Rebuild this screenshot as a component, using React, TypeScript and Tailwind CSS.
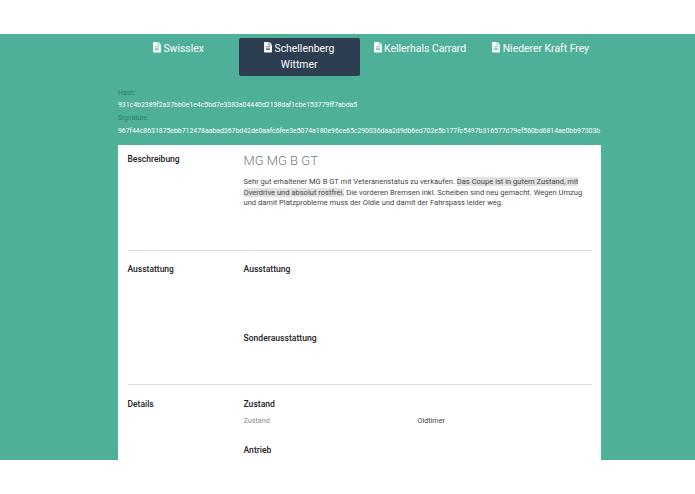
import { FaFileAlt } from 'react-icons/fa';

const tabs = [
  { name: 'Swisslex' },
  { name: 'Schellenberg Wittmer', active: true },
  { name: 'Kellerhals Carrard' },
  { name: 'Niederer Kraft Frey' },
];

export default function App() {
  return (
    <div className="bg-white h-[494px] pt-[34px] overflow-hidden font-['Roboto',sans-serif]">
      <div className="flex flex-col bg-[#4fb09a] h-[426px] overflow-hidden px-[118px] pt-1">
        <div className="grid grid-cols-4 w-[483px]">
          {tabs.map((tab) => (
            <div
              key={tab.name}
              className={`h-[38px] rounded-[2px] px-2 pt-[3px] text-center text-[10.4px] leading-[16px] text-white ${
                tab.active ? 'bg-[#2c3e50]' : ''
              }`}
            >
              <FaFileAlt className="inline-block w-[8px] h-[10.5px] mr-[2.5px] align-[-0.5px]" />
              {tab.name}
            </div>
          ))}
        </div>

        <div className="mt-[10.5px] text-[6.88px] leading-[12.75px] whitespace-nowrap">
          <p className="text-[#2f7d6b]">Hash:</p>
          <p className="text-white">931c4b2389f2a37bb0e1e4c5bd7e3383a04440d2138daf1cbe153779ff7abda5</p>
          <p className="text-[#2f7d6b]">Signature:</p>
          <p className="text-white">967f44c8631875ebb712478aabad367bd42de0aafc6fee3e5074a180e96ce65c290036daa2d9db6ed702e5b177fc5497b316577d79ef560bd6814ae0bb97303b</p>
        </div>

        <div className="mt-[7.5px] flex-1 w-[483px] bg-white px-[9.5px] text-[#333]">
          <section className="flex h-[106px] border-b border-[#ddd] pt-[8px]">
            <h3 className="w-[116px] shrink-0 text-[8.5px] leading-[12px] font-medium text-[#222]">Beschreibung</h3>
            <div>
              <h2 className="text-[13px] leading-[16px] font-light text-[#777]">MG MG B GT</h2>
              <p className="mt-[8px] text-[7.55px] leading-[10.5px] text-[#444]">
                Sehr gut erhaltener MG B GT mit Veteranenstatus zu verkaufen.{' '}
                <span className="bg-[#e2e2e2]">
                  Das Coupe ist in gutem Zustand, mit Overdrive und absolut rostfrei.
                </span>{' '}
                Die vorderen Bremsen inkl. Scheiben sind neu gemacht. Wegen Umzug und damit Platzprobleme muss der Oldie und damit der Fahrspass leider weg.
              </p>
            </div>
          </section>

          <section className="flex h-[134px] border-b border-[#ddd] pt-[12px]">
            <h3 className="w-[116px] shrink-0 text-[8.5px] leading-[12px] font-medium text-[#222]">Ausstattung</h3>
            <div>
              <h4 className="text-[8.6px] leading-[12px] font-medium text-[#222]">Ausstattung</h4>
              <h4 className="mt-[57px] text-[8.6px] leading-[12px] font-medium text-[#222]">Sonderausstattung</h4>
            </div>
          </section>

          <section className="flex pt-[13px]">
            <h3 className="w-[116px] shrink-0 text-[8.5px] leading-[12px] font-medium text-[#222]">Details</h3>
            <div className="flex-1">
              <h4 className="text-[8.6px] leading-[12px] font-medium text-[#222]">Zustand</h4>
              <div className="mt-[6px] flex text-[7.2px] leading-[10px]">
                <span className="w-[174px] text-[#888]">Zustand</span>
                <span className="text-[#444]">Oldtimer</span>
              </div>
              <h4 className="mt-[17.5px] text-[8.6px] leading-[12px] font-medium text-[#222]">Antrieb</h4>
            </div>
          </section>
        </div>
      </div>
    </div>
  );
}
